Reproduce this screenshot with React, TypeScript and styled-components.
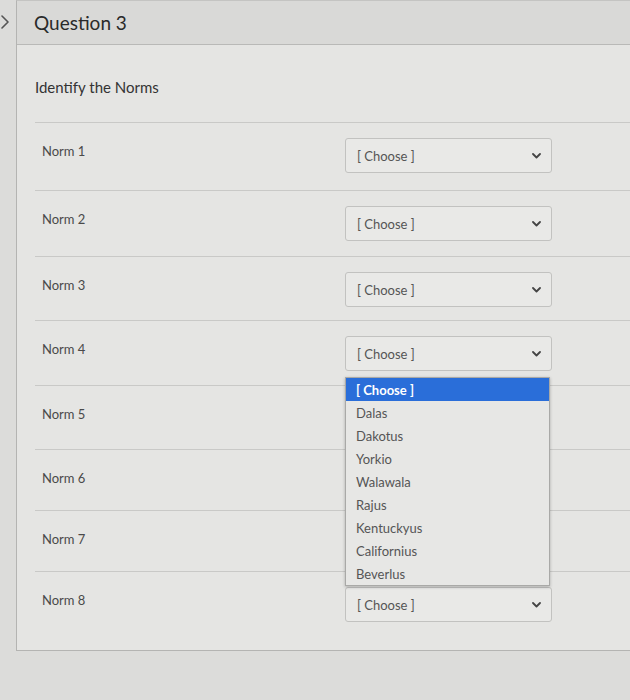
import React from "react";
import styled, { createGlobalStyle } from "styled-components";

const Global = createGlobalStyle`
  html, body { margin: 0; padding: 0; background: #dddddb; }
  body { font-family: Lato, "Open Sans", "Liberation Sans", sans-serif; }
`;

const Page = styled.div`
  display: flex;
  width: 630px;
  height: 700px;
  overflow: hidden;
  background: #dcdcda;
`;

const Gutter = styled.div`
  width: 16px;
  flex: none;
  display: flex;
  justify-content: flex-start;
  padding-top: 15px;
  box-sizing: border-box;
`;

const Card = styled.div`
  flex: 1;
  align-self: flex-start;
  margin-right: -20px;
  border-left: 1px solid #b4b4b2;
  border-top: 1px solid #c4c4c2;
  border-bottom: 1px solid #b4b4b2;
  background: #e5e5e3;
`;

const Header = styled.div`
  height: 44px;
  box-sizing: border-box;
  display: flex;
  align-items: center;
  padding-left: 17px;
  background: #d9d9d7;
  border-bottom: 1px solid #b9b9b7;
  font-size: 19px;
  color: #2a2a2a;
`;

const Body = styled.div`
  padding: 32px 0 0 18px;
`;

const Prompt = styled.div`
  font-size: 15px;
  line-height: 20px;
  color: #333;
`;

const Rows = styled.div`
  margin-top: 25px;
`;

const Row = styled.div<{ $h: number }>`
  height: ${(p) => p.$h}px;
  box-sizing: border-box;
  border-top: 1px solid #c9c9c7;
  display: grid;
  grid-template-columns: 310px 207px;
  align-items: start;
`;

const Label = styled.div`
  padding: 20px 0 0 7px;
  font-size: 13px;
  line-height: 16px;
  color: #4a4a4a;
`;

const SelectWrap = styled.div`
  position: relative;
  margin-top: 15px;
`;

const Select = styled.div`
  height: 35px;
  box-sizing: border-box;
  border: 1px solid #c2c2c0;
  border-radius: 3px;
  background: #e9e9e7;
  display: flex;
  align-items: center;
  justify-content: space-between;
  padding: 0 10px 0 11px;
  font-size: 13px;
  color: #555;
`;

const Menu = styled.div`
  position: absolute;
  top: calc(100% + 6px);
  left: 0;
  width: 203px;
  background: #e7e7e5;
  border: 1px solid #a9a9a7;
  box-shadow: 0 1px 3px rgba(0, 0, 0, 0.25);
  z-index: 2;
`;

const Option = styled.div<{ $active?: boolean }>`
  height: 23px;
  display: flex;
  align-items: center;
  padding-left: 10px;
  font-size: 13px;
  color: ${(p) => (p.$active ? "#fff" : "#555")};
  background: ${(p) => (p.$active ? "#2a6ed9" : "transparent")};
  font-weight: ${(p) => (p.$active ? 700 : 400)};
`;

const Chevron = () => (
  <svg width="9" height="6" viewBox="0 0 9 6" fill="none">
    <path d="M1 1l3.5 3.5L8 1" stroke="#444" strokeWidth="1.8" strokeLinecap="round" strokeLinejoin="round" />
  </svg>
);

const SideArrow = () => (
  <svg width="10" height="14" viewBox="0 0 10 14" fill="none">
    <path d="M2 1l6 6-6 6" stroke="#555" strokeWidth="1.6" strokeLinecap="round" strokeLinejoin="round" />
  </svg>
);

const options = [
  "[ Choose ]",
  "Dalas",
  "Dakotus",
  "Yorkio",
  "Walawala",
  "Rajus",
  "Kentuckyus",
  "Californius",
  "Beverlus",
];

const heights = [68, 66, 64, 65, 64, 61, 61, 79];

export default function App() {
  const hasSelect = (n: number) => n <= 4 || n === 8;
  return (
    <>
      <Global />
      <Page>
        <Gutter>
          <SideArrow />
        </Gutter>
        <Card>
          <Header>Question 3</Header>
          <Body>
            <Prompt>Identify the Norms</Prompt>
            <Rows>
              {heights.map((h, i) => {
                const n = i + 1;
                return (
                  <Row key={n} $h={h}>
                    <Label>Norm {n}</Label>
                    {hasSelect(n) ? (
                      <SelectWrap>
                        <Select>
                          <span>[ Choose ]</span>
                          <Chevron />
                        </Select>
                        {n === 4 && (
                          <Menu>
                            {options.map((o, j) => (
                              <Option key={o} $active={j === 0}>
                                {o}
                              </Option>
                            ))}
                          </Menu>
                        )}
                      </SelectWrap>
                    ) : (
                      <div />
                    )}
                  </Row>
                );
              })}
            </Rows>
          </Body>
        </Card>
      </Page>
    </>
  );
}
